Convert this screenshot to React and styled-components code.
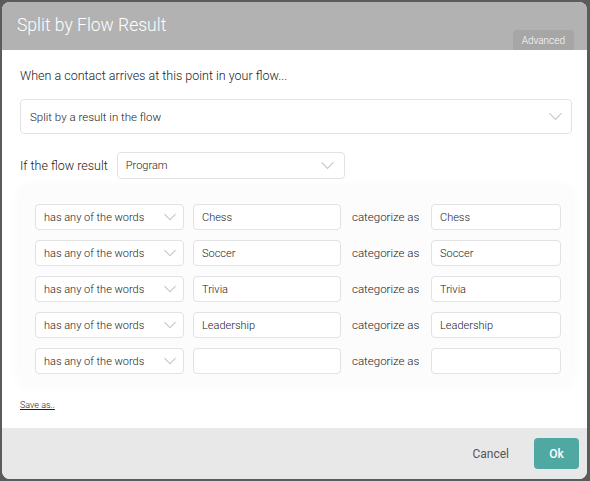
import React from "react"
import styled, { createGlobalStyle } from "styled-components"

const GlobalStyle = createGlobalStyle`
  html, body {
    margin: 0;
    padding: 0;
    background: #5b5b5b;
    font-family: Roboto, "Liberation Sans", sans-serif;
  }
  * { box-sizing: border-box; }
`

const Page = styled.div`
  width: 590px;
  height: 481px;
  padding: 2px 3px 2px 2px;
`

const Dialog = styled.div`
  height: 100%;
  display: flex;
  flex-direction: column;
  background: #fff;
  border-radius: 8px;
  overflow: hidden;
`

const Header = styled.div`
  position: relative;
  height: 48px;
  background: #b2b2b2;
  padding: 13px 15px 0;
`

const Title = styled.h1`
  margin: 0;
  font-size: 17.5px;
  font-weight: 300;
  color: #fff;
`

const AdvancedTab = styled.div`
  position: absolute;
  right: 13px;
  bottom: 0;
  height: 20px;
  padding: 0 9px;
  display: flex;
  align-items: center;
  background: #a6a6a6;
  border-radius: 4px 4px 0 0;
  color: #fff;
  font-size: 10px;
  font-weight: 300;
`

const Body = styled.div`
  flex: 1;
  padding: 18px 15px 0 18px;
  display: flex;
  flex-direction: column;
`

const Intro = styled.div`
  font-size: 12.5px;
  font-weight: 300;
  color: #222;
  margin-bottom: 16px;
`

const SelectBox = styled.div`
  width: ${p => p.$width || "100%"};
  height: ${p => p.$height || 26}px;
  border: 1px solid #e2e2e2;
  border-radius: 4px;
  background: #fff;
  display: flex;
  align-items: center;
  justify-content: space-between;
  padding: 0 ${p => p.$padRight || 10}px 0 ${p => p.$padLeft || 8}px;
  font-size: ${p => p.$fontSize || 11}px;
  font-weight: 300;
  color: #222;
`

const Chevron = ({ size = 14 }) => (
  <svg width={size} height={size} viewBox="0 0 16 16" fill="none">
    <path d="M2 5l6 6 6-6" stroke="#c8c8c8" strokeWidth="1.3" strokeLinecap="round" />
  </svg>
)

const ResultRow = styled.div`
  display: flex;
  align-items: center;
  margin-top: 18px;
  font-size: 12.5px;
  font-weight: 300;
  color: #222;
  gap: 9px;
`

const CaseBox = styled.div`
  margin-top: 9px;
  padding: 16px 0 10px 15px;
  width: 552px;
  background: #fcfcfc;
  box-shadow: 0 0 14px rgba(0, 0, 0, 0.035);
  border-radius: 6px;
  display: flex;
  flex-direction: column;
  gap: 10px;
`

const CaseRow = styled.div`
  display: flex;
  align-items: center;
`

const TextInput = styled.div`
  width: ${p => p.$width}px;
  height: 26px;
  border: 1px solid #e2e2e2;
  border-radius: 4px;
  background: #fff;
  padding: 0 8px;
  display: flex;
  align-items: center;
  font-size: 11px;
  font-weight: 300;
  color: #222;
  margin-left: ${p => p.$gap || 0}px;
`

const CategorizeLabel = styled.span`
  margin-left: 11px;
  width: 79px;
  font-size: 11.5px;
  font-weight: 300;
  color: #222;
`

const SaveAs = styled.a`
  margin-top: 16px;
  font-size: 9px;
  font-weight: 300;
  color: #222;
  text-decoration: underline;
`

const Footer = styled.div`
  height: 51px;
  background: #e8e8e8;
  display: flex;
  align-items: center;
  justify-content: flex-end;
  padding: 0 8px 0 0;
  gap: 25px;
`

const CancelButton = styled.span`
  font-size: 12px;
  color: #555;
  font-weight: 400;
`

const OkButton = styled.button`
  width: 45px;
  height: 31px;
  border: none;
  border-radius: 4px;
  background: #50a8a2;
  color: #fff;
  font-family: inherit;
  font-size: 12px;
  font-weight: 500;
`

const cases = ["Chess", "Soccer", "Trivia", "Leadership", ""]

const App = () => (
  <Page>
    <GlobalStyle />
    <Dialog>
      <Header>
        <Title>Split by Flow Result</Title>
        <AdvancedTab>Advanced</AdvancedTab>
      </Header>
      <Body>
        <Intro>When a contact arrives at this point in your flow...</Intro>
        <SelectBox $height={35} $fontSize={11.5} $padLeft={9} $padRight={8}>
          Split by a result in the flow
          <Chevron size={15} />
        </SelectBox>
        <ResultRow>
          If the flow result
          <SelectBox $width="228px" $height={27} $padRight={9}>
            Program
            <Chevron size={15} />
          </SelectBox>
        </ResultRow>
        <CaseBox>
          {cases.map((c, i) => (
            <CaseRow key={i}>
              <SelectBox $width="149px" $padRight={6}>
                has any of the words
                <Chevron />
              </SelectBox>
              <TextInput $width={148} $gap={9}>{c}</TextInput>
              <CategorizeLabel>categorize as</CategorizeLabel>
              <TextInput $width={130}>{c}</TextInput>
            </CaseRow>
          ))}
        </CaseBox>
        <SaveAs>Save as..</SaveAs>
      </Body>
      <Footer>
        <CancelButton>Cancel</CancelButton>
        <OkButton>Ok</OkButton>
      </Footer>
    </Dialog>
  </Page>
)

export default App
